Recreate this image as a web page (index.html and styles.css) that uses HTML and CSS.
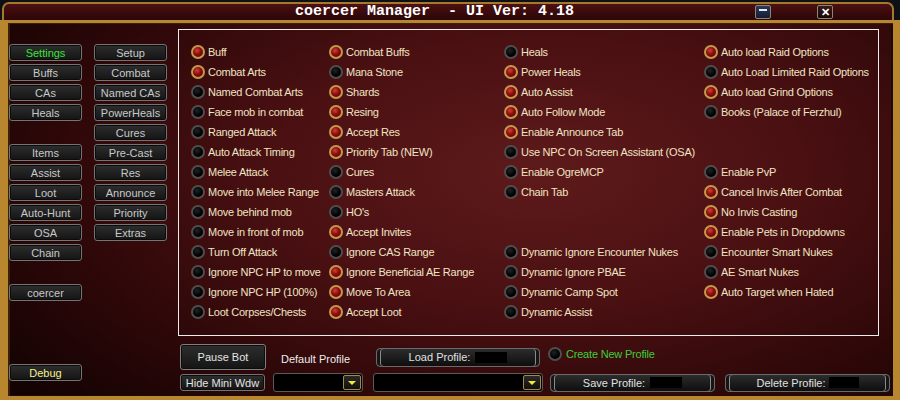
FILE: index.html
```html
<!DOCTYPE html>
<html lang="en">

<head>
    <meta charset="UTF-8">
    <title>coercer Manager</title>
    <link rel="stylesheet" href="styles.css">
</head>

<body>

    <div class="window">
        <!-- Title bar -->
        <div class="titlebar">
            <span class="title">coercer Manager  - UI Ver: 4.18</span>
            <span class="win-btn min-btn"><span class="dash"></span></span>
            <span class="win-btn close-btn">&#x2715;</span>
        </div>

        <div class="frame">
            <!-- Tab buttons -->
            <div class="sidebar">
                <div class="side-col">
                    <div class="btn active">Settings</div>
                    <div class="btn">Buffs</div>
                    <div class="btn">CAs</div>
                    <div class="btn">Heals</div>
                    <div class="spacer"></div>
                    <div class="btn">Items</div>
                    <div class="btn">Assist</div>
                    <div class="btn">Loot</div>
                    <div class="btn">Auto-Hunt</div>
                    <div class="btn">OSA</div>
                    <div class="btn">Chain</div>
                    <div class="spacer"></div>
                    <div class="btn">coercer</div>
                    <div class="spacer big"></div>
                    <div class="btn debug">Debug</div>
                </div>
                <div class="side-col">
                    <div class="btn">Setup</div>
                    <div class="btn">Combat</div>
                    <div class="btn">Named CAs</div>
                    <div class="btn">PowerHeals</div>
                    <div class="btn">Cures</div>
                    <div class="btn">Pre-Cast</div>
                    <div class="btn">Res</div>
                    <div class="btn">Announce</div>
                    <div class="btn">Priority</div>
                    <div class="btn">Extras</div>
                </div>
            </div>

            <div class="main">
                <!-- Settings options -->
                <div class="options">
                    <div class="opt on"><span class="cb"></span>Buff</div>
                    <div class="opt on"><span class="cb"></span>Combat Arts</div>
                    <div class="opt"><span class="cb"></span>Named Combat Arts</div>
                    <div class="opt"><span class="cb"></span>Face mob in combat</div>
                    <div class="opt"><span class="cb"></span>Ranged Attack</div>
                    <div class="opt"><span class="cb"></span>Auto Attack Timing</div>
                    <div class="opt"><span class="cb"></span>Melee Attack</div>
                    <div class="opt"><span class="cb"></span>Move into Melee Range</div>
                    <div class="opt"><span class="cb"></span>Move behind mob</div>
                    <div class="opt"><span class="cb"></span>Move in front of mob</div>
                    <div class="opt"><span class="cb"></span>Turn Off Attack</div>
                    <div class="opt"><span class="cb"></span>Ignore NPC HP to move</div>
                    <div class="opt"><span class="cb"></span>Ignore NPC HP (100%)</div>
                    <div class="opt"><span class="cb"></span>Loot Corpses/Chests</div>

                    <div class="opt on"><span class="cb"></span>Combat Buffs</div>
                    <div class="opt"><span class="cb"></span>Mana Stone</div>
                    <div class="opt on"><span class="cb"></span>Shards</div>
                    <div class="opt on"><span class="cb"></span>Resing</div>
                    <div class="opt on"><span class="cb"></span>Accept Res</div>
                    <div class="opt on"><span class="cb"></span>Priority Tab (NEW)</div>
                    <div class="opt"><span class="cb"></span>Cures</div>
                    <div class="opt"><span class="cb"></span>Masters Attack</div>
                    <div class="opt"><span class="cb"></span>HO's</div>
                    <div class="opt on"><span class="cb"></span>Accept Invites</div>
                    <div class="opt"><span class="cb"></span>Ignore CAS Range</div>
                    <div class="opt on"><span class="cb"></span>Ignore Beneficial AE Range</div>
                    <div class="opt on"><span class="cb"></span>Move To Area</div>
                    <div class="opt on"><span class="cb"></span>Accept Loot</div>

                    <div class="opt"><span class="cb"></span>Heals</div>
                    <div class="opt on"><span class="cb"></span>Power Heals</div>
                    <div class="opt on"><span class="cb"></span>Auto Assist</div>
                    <div class="opt on"><span class="cb"></span>Auto Follow Mode</div>
                    <div class="opt on"><span class="cb"></span>Enable Announce Tab</div>
                    <div class="opt"><span class="cb"></span>Use NPC On Screen Assistant (OSA)</div>
                    <div class="opt"><span class="cb"></span>Enable OgreMCP</div>
                    <div class="opt"><span class="cb"></span>Chain Tab</div>
                    <div class="opt"></div>
                    <div class="opt"></div>
                    <div class="opt"><span class="cb"></span>Dynamic Ignore Encounter Nukes</div>
                    <div class="opt"><span class="cb"></span>Dynamic Ignore PBAE</div>
                    <div class="opt"><span class="cb"></span>Dynamic Camp Spot</div>
                    <div class="opt"><span class="cb"></span>Dynamic Assist</div>

                    <div class="opt on"><span class="cb"></span>Auto load Raid Options</div>
                    <div class="opt"><span class="cb"></span>Auto Load Limited Raid Options</div>
                    <div class="opt on"><span class="cb"></span>Auto load Grind Options</div>
                    <div class="opt"><span class="cb"></span>Books (Palace of Ferzhul)</div>
                    <div class="opt"></div>
                    <div class="opt"></div>
                    <div class="opt"><span class="cb"></span>Enable PvP</div>
                    <div class="opt on"><span class="cb"></span>Cancel Invis After Combat</div>
                    <div class="opt on"><span class="cb"></span>No Invis Casting</div>
                    <div class="opt on"><span class="cb"></span>Enable Pets in Dropdowns</div>
                    <div class="opt"><span class="cb"></span>Encounter Smart Nukes</div>
                    <div class="opt"><span class="cb"></span>AE Smart Nukes</div>
                    <div class="opt on"><span class="cb"></span>Auto Target when Hated</div>
                </div>

                <!-- Profile controls -->
                <div class="footer">
                    <div class="footer-row row1">
                        <div class="btn pause-btn">Pause Bot</div>
                        <div class="default-label">Default Profile</div>
                        <div class="profile-btn load">Load Profile:<span class="redact"></span></div>
                        <div class="new-profile"><span class="cb"></span>Create New Profile</div>
                    </div>
                    <div class="footer-row row2">
                        <div class="btn hide-btn">Hide Mini Wdw</div>
                        <div class="dropdown dd-small"><span class="arrow"></span></div>
                        <div class="dropdown dd-wide"><span class="arrow"></span></div>
                        <div class="profile-btn save">Save Profile:<span class="redact"></span></div>
                        <div class="profile-btn delete">Delete Profile:<span class="redact short"></span></div>
                    </div>
                </div>
            </div>
        </div>
    </div>

</body>

</html>
```

FILE: styles.css
```css
* {
    box-sizing: border-box;
}

body {
    margin: 0;
    background-color: #0d1117;
    font-family: 'Liberation Sans', Arial, sans-serif;
    font-size: 11px;
}

.window {
    width: 900px;
    height: 400px;
    display: flex;
    flex-direction: column;
    overflow: hidden;
}

/* Title bar */
.titlebar {
    height: 18px;
    margin: 2px 6px 0 2px;
    border: 2px solid #a8782a;
    border-bottom: none;
    border-radius: 7px 7px 0 0;
    background: linear-gradient(#4c1012, #2a0607);
    display: flex;
    align-items: center;
}

.title {
    margin-left: 291px;
    color: #fff;
    font-family: 'Liberation Mono', 'Courier New', monospace;
    font-weight: bold;
    font-size: 15px;
    line-height: 16px;
    white-space: pre;
}

.win-btn {
    width: 16px;
    height: 14px;
    border: 1px solid #8c8670;
    border-radius: 2px;
    display: flex;
    justify-content: center;
}

.min-btn {
    margin-left: 181px;
    background: linear-gradient(#2a3a5c, #141d33);
    align-items: flex-start;
}

.min-btn .dash {
    width: 8px;
    height: 2px;
    margin-top: 3px;
    background: #e8ecf4;
}

.close-btn {
    margin-left: 46px;
    background: linear-gradient(#3a1a1a, #1a0606);
    color: #fff;
    font-size: 11px;
    font-weight: bold;
    line-height: 12px;
    align-items: center;
}

/* Main frame */
.frame {
    flex: 1;
    display: flex;
    border-style: solid;
    border-color: #b8862e;
    border-width: 3px 7px 4px 8px;
    background: radial-gradient(ellipse 75% 90% at 60% 40%, #5e1a1b 0%, #4a1012 40%, #2c0708 75%, #140303 100%);
    box-shadow: inset 2px 1px 0 #3a2008, inset -2px -1px 0 #1a0c04;
}

.sidebar {
    width: 170px;
    padding: 21px 0 0 1px;
    display: flex;
    gap: 12px;
}

.side-col {
    width: 73px;
    display: flex;
    flex-direction: column;
    gap: 3px;
}

.spacer {
    height: 17px;
}

.spacer.big {
    height: 57px;
}

.btn {
    height: 17px;
    background: linear-gradient(#2e2e2e, #141414);
    border: 1px solid #747474;
    border-radius: 3px;
    box-shadow: inset 0 0 0 1px #0c0c0c;
    color: #c8c8c8;
    display: flex;
    align-items: center;
    justify-content: center;
    white-space: nowrap;
}

.btn.active {
    color: #3ce03c;
}

.btn.debug {
    color: #f4f08a;
}

.main {
    flex: 1;
    display: flex;
    flex-direction: column;
}

/* Option checkboxes */
.options {
    margin-top: 6px;
    width: 701px;
    height: 307px;
    border: 1px solid #ececec;
    padding: 12px 0 0 12px;
    display: grid;
    grid-template-columns: 138px 175px 200px 1fr;
    grid-template-rows: repeat(14, 20px);
    grid-auto-flow: column;
}

.opt {
    display: flex;
    align-items: center;
    gap: 3px;
    color: #f0e4c4;
    white-space: nowrap;
    letter-spacing: -0.25px;
}

.cb {
    width: 14px;
    height: 14px;
    flex: none;
    border-radius: 50%;
    border: 2px solid #4e4e4e;
    background: radial-gradient(circle at 40% 35%, #222, #000 60%);
}

.on .cb {
    border-color: #c39a4c;
    background: radial-gradient(circle at 40% 35%, #d0403a, #8c0c0c 45%, #4a0404 100%);
}

/* Footer */
.footer {
    padding: 8px 0 0 2px;
}

.footer-row {
    display: flex;
    align-items: center;
}

.row1 {
    height: 26px;
}

.row2 {
    height: 19px;
    margin-top: 3px;
}

.pause-btn {
    width: 86px;
    height: 26px;
    color: #e4e4e4;
    border-color: #808080;
}

.default-label {
    width: 110px;
    padding: 3px 0 0 15px;
    color: #ececec;
}

.profile-btn {
    height: 19px;
    background: linear-gradient(#2c2c2c, #0e0e0e);
    border: 1px solid #6a6a6a;
    border-radius: 4px;
    box-shadow: inset 3px 0 0 #161616, inset 4px 0 0 #8a8a8a, inset -3px 0 0 #161616, inset -4px 0 0 #8a8a8a;
    color: #e0e0e0;
    display: flex;
    align-items: center;
    justify-content: center;
    white-space: nowrap;
}

.profile-btn.load {
    width: 164px;
}

.profile-btn.save {
    width: 165px;
    height: 18px;
    margin-left: 7px;
}

.profile-btn.delete {
    width: 165px;
    height: 18px;
    margin-left: 10px;
}

.redact {
    width: 32px;
    height: 11px;
    margin-left: 5px;
    background: #000;
}

.redact.short {
    width: 30px;
    margin-left: 3px;
}

.new-profile {
    margin-left: 8px;
    margin-top: -6px;
    display: flex;
    align-items: center;
    gap: 4px;
    color: #3ccc3c;
    letter-spacing: -0.2px;
}

.hide-btn {
    width: 85px;
    height: 17px;
    color: #e4e4e4;
}

.dropdown {
    height: 19px;
    background: #000;
    border: 1px solid #5a5a5a;
    border-radius: 3px;
    display: flex;
    justify-content: flex-end;
    align-items: center;
    padding-right: 1px;
}

.dd-small {
    width: 90px;
    margin-left: 8px;
}

.dd-wide {
    width: 170px;
    margin-left: 10px;
}

.arrow {
    width: 18px;
    height: 15px;
    border: 1px solid #a88a3c;
    border-radius: 2px;
    background: linear-gradient(#2a2a2a, #101010);
    display: flex;
    justify-content: center;
    align-items: center;
}

.arrow::after {
    content: "";
    border-left: 4px solid transparent;
    border-right: 4px solid transparent;
    border-top: 4px solid #f4e83a;
}
```
